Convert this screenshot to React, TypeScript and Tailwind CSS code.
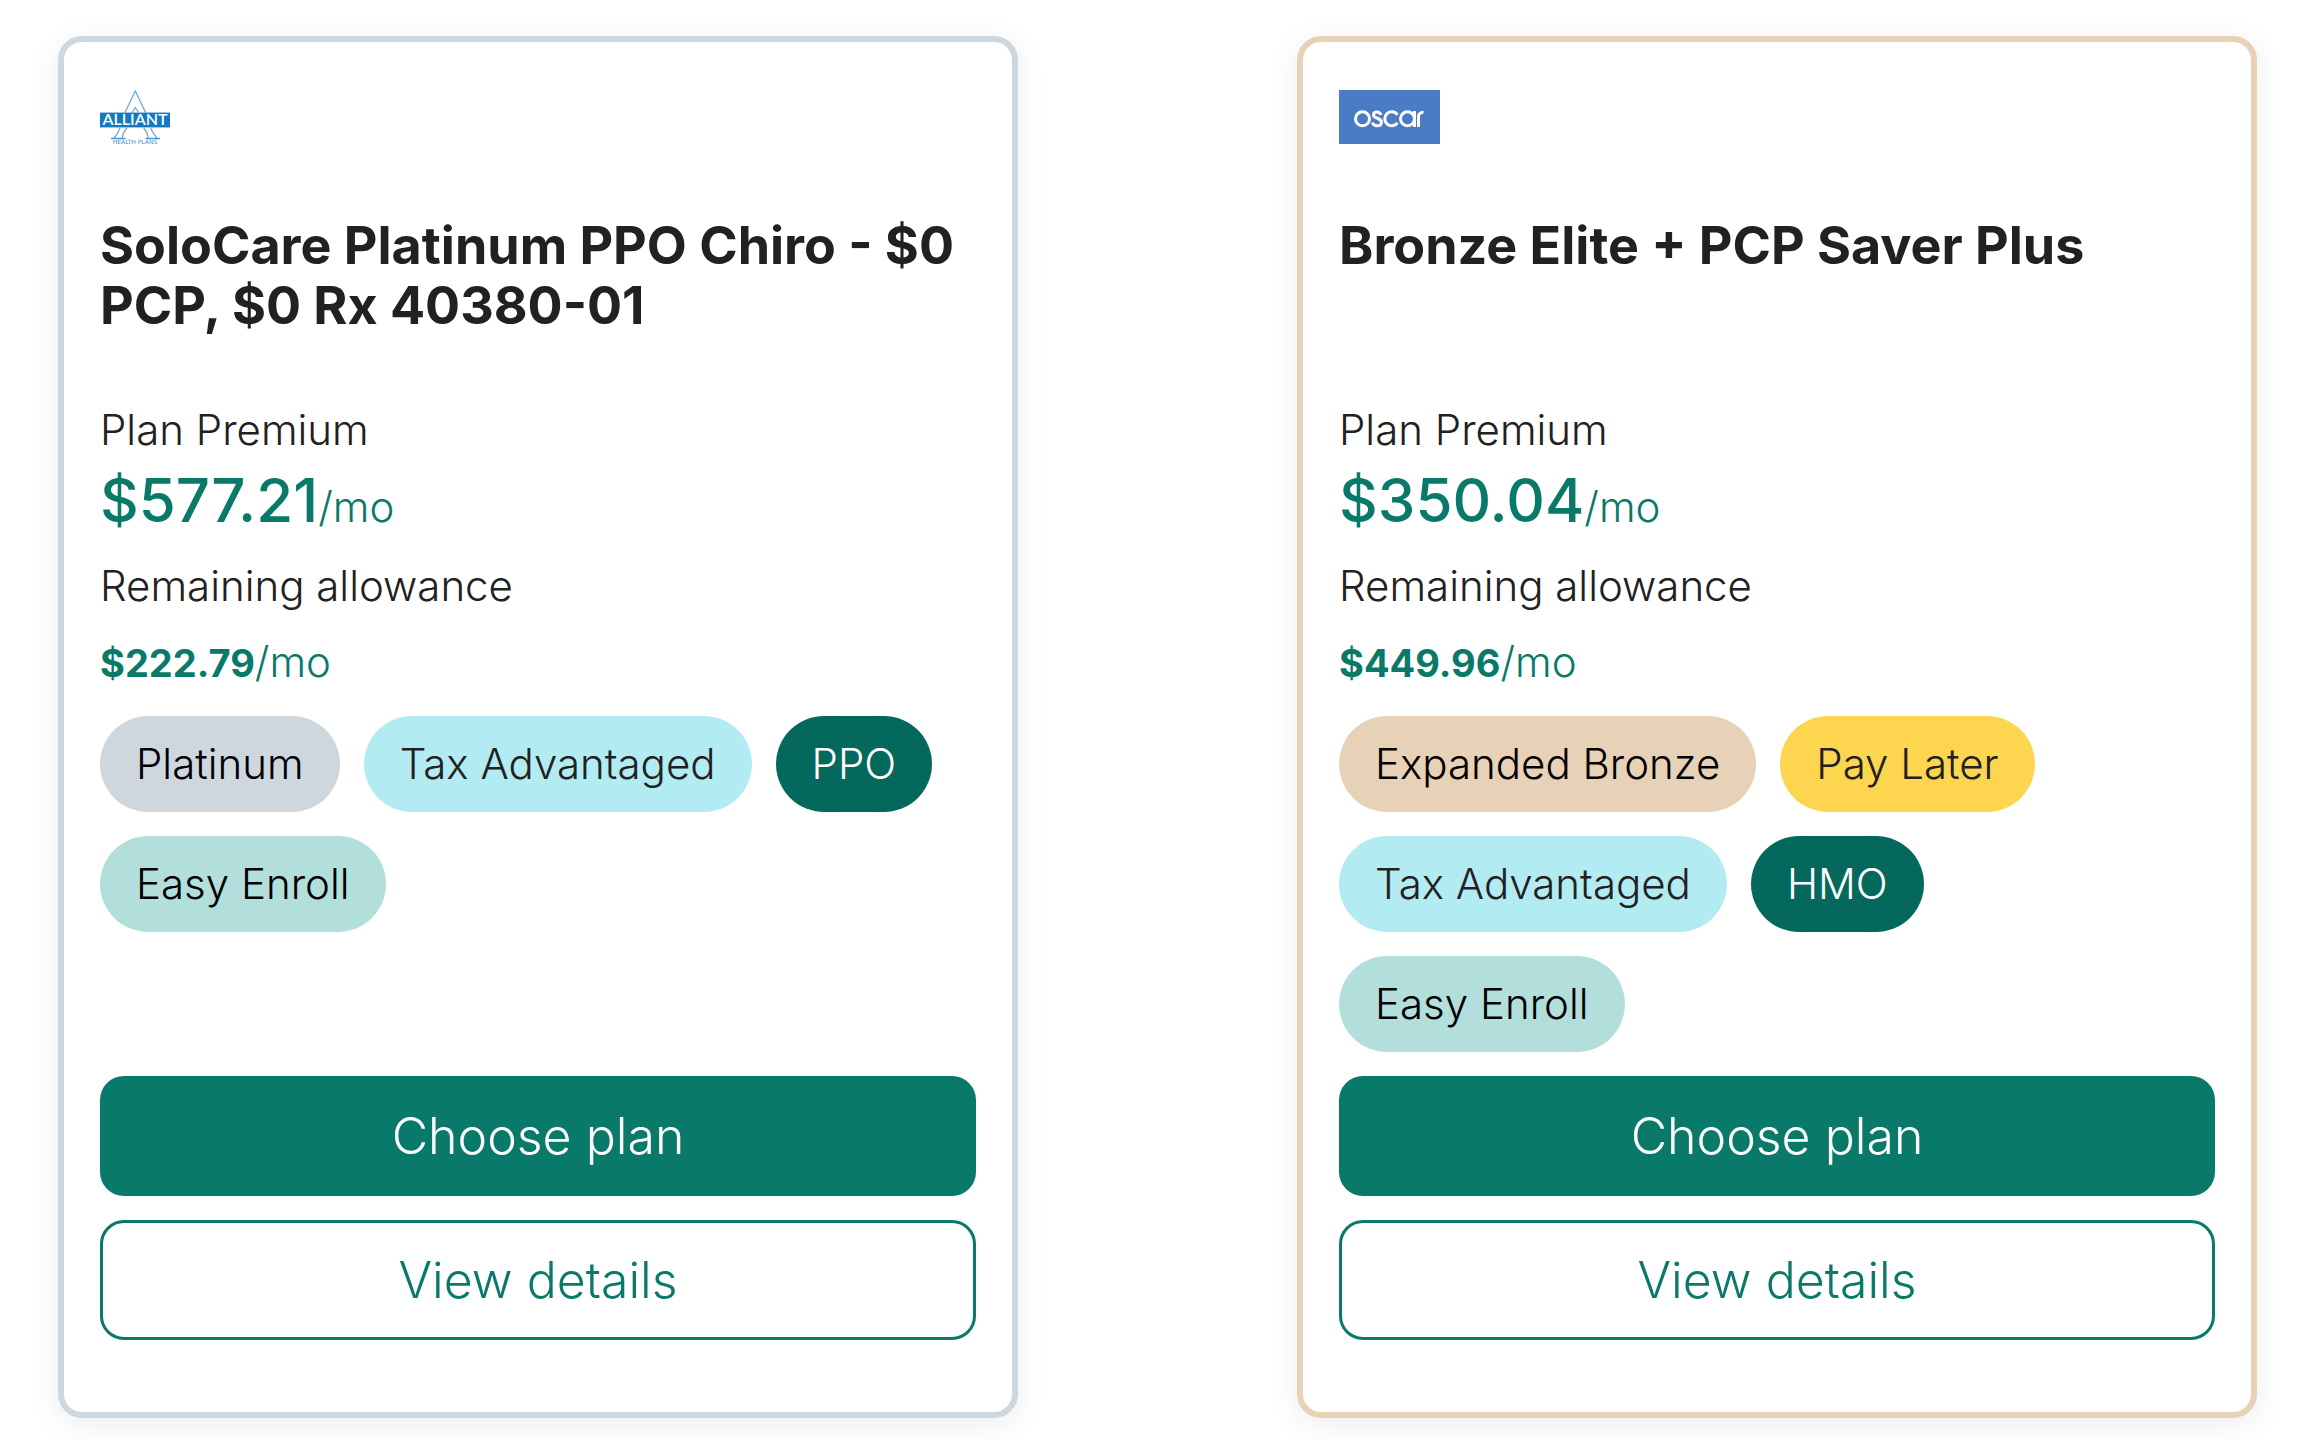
type Tag = { label: string; color: string };

type Plan = {
  carrier: 'alliant' | 'oscar';
  name: string;
  premium: string;
  allowance: string;
  border: string;
  tags: Tag[];
};

const plans: Plan[] = [
  {
    carrier: 'alliant',
    name: 'SoloCare Platinum PPO Chiro - $0 PCP, $0 Rx 40380-01',
    premium: '$577.21',
    allowance: '$222.79',
    border: 'border-[#ced6de]',
    tags: [
      { label: 'Platinum', color: 'bg-[#ced6de] text-black' },
      { label: 'Tax Advantaged', color: 'bg-[#b2ebf2] text-[#212121]' },
      { label: 'PPO', color: 'bg-[#04695c] text-white' },
      { label: 'Easy Enroll', color: 'bg-[#b2dfdb] text-black' },
    ],
  },
  {
    carrier: 'oscar',
    name: 'Bronze Elite + PCP Saver Plus',
    premium: '$350.04',
    allowance: '$449.96',
    border: 'border-[#e7d1b7]',
    tags: [
      { label: 'Expanded Bronze', color: 'bg-[#e7d1b7] text-black' },
      { label: 'Pay Later', color: 'bg-[#fdd54f] text-[#212121]' },
      { label: 'Tax Advantaged', color: 'bg-[#b2ebf2] text-[#212121]' },
      { label: 'HMO', color: 'bg-[#04695c] text-white' },
      { label: 'Easy Enroll', color: 'bg-[#b2dfdb] text-black' },
    ],
  },
];

function AlliantLogo() {
  return (
    <svg viewBox="0 0 70 54" className="h-[54px] w-[70px]" role="img" aria-label="Alliant Health Plans">
      <rect y="22" width="70" height="16" fill="#9cc8e8" />
      <rect y="23" width="70" height="14" fill="#1478c2" />
      {/* Outlined A above and below the banner */}
      <g fill="none" stroke="#5fa6da" strokeWidth="1.2">
        <path d="M25 22.500 L35.300 1 L45.600 22.500" />
        <path d="M32 22.500 L35.300 17.500 L38.600 22.500" />
        <path d="M20 38 Q17 45 14 48 M27 38 Q22.500 43 22.500 48" />
        <path d="M50.600 38 Q54 45 57 48 M43.600 38 Q48 43 48 48" />
      </g>
      <path d="M11 48.500 H25.500 M45.500 48.500 H60" stroke="#4a96d0" strokeWidth="1.500" />
      <text x="35" y="35" textAnchor="middle" fontFamily="Lato, sans-serif" fontSize="16" fontWeight="600" fill="white">
        ALLIANT
      </text>
      <text x="35" y="54" textAnchor="middle" fontFamily="'DejaVu Sans', sans-serif" fontSize="6" fill="#3d8fd0">
        HEALTH PLANS
      </text>
    </svg>
  );
}

function OscarLogo() {
  return (
    <svg viewBox="0 0 101 54" className="h-[54px] w-[101px]" role="img" aria-label="Oscar">
      <rect width="101" height="54" fill="#4a7bc5" />
      {/* Round bowls of the wordmark */}
      <g fill="none" stroke="white" strokeWidth="3">
        <circle cx="23.500" cy="28.800" r="7" />
        <path d="M42 25 C40.500 21 34.500 21 34.500 25 C34.500 29 42.500 27.500 42.500 32 C42.500 37 34.500 37 33.500 32.500" />
        <path d="M58.500 24.800 A7 7 0 1 0 58.500 32.800" />
        <circle cx="68.500" cy="28.800" r="7" />
        <path d="M75.500 21 V37" />
        <path d="M79.500 37 V27 Q79.500 22.500 84.500 22.300" />
      </g>
    </svg>
  );
}

function PlanCard({ plan }: { plan: Plan }) {
  return (
    <article
      className={`flex flex-col rounded-3xl border-6 bg-white px-9 pt-12 pb-[72px] shadow-[0_6px_30px_rgba(0,0,0,0.08)] ${plan.border}`}
    >
      {plan.carrier === 'alliant' ? <AlliantLogo /> : <OscarLogo />}

      <h2 className="mt-[72px] min-h-[184px] text-[52px] leading-[60px] font-bold">{plan.name}</h2>

      {/* Pricing */}
      <p className="text-[42px] leading-[60px] font-light">Plan Premium</p>
      <p className="text-[60px] leading-[80px] font-medium text-[#097969]">
        {plan.premium}
        <span className="text-[42px] leading-none font-light">/mo</span>
      </p>
      <p className="mt-4 text-[42px] leading-[60px] font-light">Remaining allowance</p>
      <p className="mt-4 text-[42px] leading-[60px] font-light text-[#097969]">
        <span className="text-[38px] leading-none font-bold">{plan.allowance}</span>/mo
      </p>

      {/* Tags */}
      <ul className="mt-6 mb-6 flex flex-wrap gap-6">
        {plan.tags.map((tag) => (
          <li key={tag.label} className={`rounded-full px-9 py-[18px] text-[42px] leading-[60px] font-light ${tag.color}`}>
            {tag.label}
          </li>
        ))}
      </ul>

      {/* Actions */}
      <div className="mt-auto flex flex-col gap-6">
        <button type="button" className="h-[120px] rounded-3xl bg-[#097969] text-[50px] leading-[60px] font-light text-white">
          Choose plan
        </button>
        <button
          type="button"
          className="h-[120px] rounded-3xl border-3 border-[#097969] bg-white text-[50px] leading-[60px] font-light text-[#097969]"
        >
          View details
        </button>
      </div>
    </article>
  );
}

export default function App() {
  return (
    <main className="grid grid-cols-2 gap-[279px] bg-white py-9 pr-[59px] pl-[58px] font-[Inter,sans-serif] text-[#212121]">
      {plans.map((plan) => (
        <PlanCard key={plan.name} plan={plan} />
      ))}
    </main>
  );
}
